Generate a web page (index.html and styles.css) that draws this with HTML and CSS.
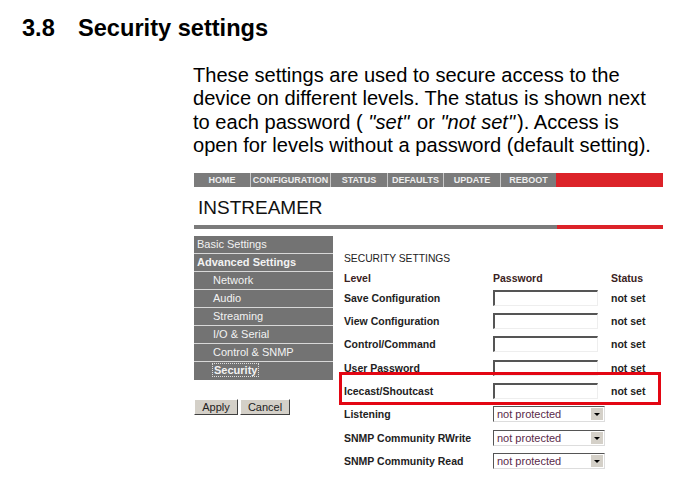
FILE: index.html
```html
<!DOCTYPE html>
<html lang="en">
<head>
  <meta charset="UTF-8">
  <title>3.8 Security settings</title>
  <link rel="stylesheet" href="styles.css">
</head>
<body>
  <h1><span class="num">3.8</span>Security settings</h1>

  <div class="doc">
    <p class="intro">These settings are used to secure access to the device on different levels. The status is shown next to each password ( <i>"set"</i> or <i>"not set"</i>). Access is open for levels without a password (default setting).</p>

    <div class="webui">
      <div class="nav">
        <span class="nav-item home">HOME</span>
        <span class="nav-item config">CONFIGURATION</span>
        <span class="nav-item status">STATUS</span>
        <span class="nav-item defaults">DEFAULTS</span>
        <span class="nav-item update">UPDATE</span>
        <span class="nav-item reboot">REBOOT</span>
        <span class="nav-fill"></span>
      </div>

      <div class="brand">INSTREAMER</div>
      <div class="rule"><span class="rule-gray"></span><span class="rule-red"></span></div>

      <div class="body">
        <div class="side">
          <div class="menu">
            <div class="menu-item top">Basic Settings</div>
            <div class="menu-item top bold">Advanced Settings</div>
            <div class="menu-item sub">Network</div>
            <div class="menu-item sub">Audio</div>
            <div class="menu-item sub">Streaming</div>
            <div class="menu-item sub">I/O &amp; Serial</div>
            <div class="menu-item sub">Control &amp; SNMP</div>
            <div class="menu-item sub bold"><span class="focus">Security</span></div>
          </div>
          <div class="buttons">
            <button class="btn apply">Apply</button>
            <button class="btn cancel">Cancel</button>
          </div>
        </div>

        <div class="main">
          <div class="title">SECURITY SETTINGS</div>
          <div class="grid">
            <div class="head">Level</div><div class="head">Password</div><div class="head">Status</div>

            <div class="label">Save Configuration</div><div><span class="field"></span></div><div class="state">not set</div>
            <div class="label">View Configuration</div><div><span class="field"></span></div><div class="state">not set</div>
            <div class="label">Control/Command</div><div><span class="field"></span></div><div class="state">not set</div>
            <div class="label">User Password</div><div><span class="field"></span></div><div class="state">not set</div>
            <div class="label mark">Icecast/Shoutcast</div><div><span class="field"></span></div><div class="state">not set</div>
            <div class="label">Listening</div><div class="wide"><span class="select">not protected<span class="arrow"></span></span></div>
            <div class="label">SNMP Community RWrite</div><div class="wide"><span class="select">not protected<span class="arrow"></span></span></div>
            <div class="label">SNMP Community Read</div><div class="wide"><span class="select">not protected<span class="arrow"></span></span></div>
          </div>
        </div>
      </div>
    </div>
  </div>
</body>
</html>
```

FILE: styles.css
```css
body {
  margin: 0;
  background: #fff;
  font-family: "Liberation Sans", Arial, sans-serif;
  color: #000;
}

h1 {
  margin: 0;
  padding: 14px 0 0 22px;
  font-size: 23.6px;
  line-height: 28px;
  font-weight: bold;
}

h1 .num {
  display: inline-block;
  width: 56px;
}

.doc {
  padding-left: 193px;
}

.intro {
  margin: 22px 0 0;
  width: 470px;
  font-size: 20.1px;
  line-height: 23.3px;
}

.intro i {
  padding-right: 2px;
}

.webui {
  width: 469px;
  margin: 16px 0 0 1px;
}

/* top navigation */
.nav {
  display: flex;
  height: 14px;
}

.nav-item {
  background: #7b7b7b;
  color: #eee;
  font-size: 9px;
  font-weight: bold;
  line-height: 14px;
  text-align: center;
  border-right: 1px solid #c8c8c8;
}

.home { width: 56px; }
.config { width: 79px; }
.status { width: 56px; }
.defaults { width: 55px; }
.update { width: 56px; }
.reboot { width: 55px; border-right: none; }

.nav-fill {
  flex: 1;
  background: #dc2329;
}

.brand {
  padding: 9px 0 0 4px;
  height: 29px;
  font-size: 19px;
  line-height: 24px;
  color: #111;
}

.rule {
  display: flex;
  height: 4px;
}

.rule-gray {
  width: 363px;
  background: #7b7b7b;
}

.rule-red {
  flex: 1;
  background: #dc2329;
}

.body {
  display: flex;
  gap: 11px;
  padding-top: 7px;
}

/* left menu */
.side {
  width: 139px;
}

.menu {
  background: #737373;
}

.menu-item {
  height: 17px;
  line-height: 17px;
  font-size: 11px;
  color: #f2f2f2;
  border-bottom: 1px solid #d8d8d8;
  padding-left: 3px;
}

.menu-item.sub {
  padding-left: 19px;
}

.menu-item.bold {
  font-weight: bold;
}

.menu-item:last-child {
  height: 18px;
  border-bottom: none;
}

.focus {
  outline: 1px dotted #ddd;
  padding: 0 1px;
}

.buttons {
  display: flex;
  gap: 2px;
  margin-top: 19px;
}

.btn {
  height: 16px;
  padding: 0 4px;
  font-family: "Liberation Sans", Arial, sans-serif;
  font-size: 11px;
  line-height: 12px;
  color: #222;
  background: #d4d0c8;
  border: 1px solid;
  border-color: #fff #404040 #404040 #fff;
}

.apply { width: 44px; }
.cancel { width: 50px; }

/* settings table */
.main {
  flex: 1;
  padding-top: 16px;
}

.title {
  font-size: 10.3px;
  line-height: 13px;
  margin-bottom: 4px;
  color: #222;
}

.grid {
  display: grid;
  grid-template-columns: 149px 118px 1fr;
  grid-template-rows: 17px;
  grid-auto-rows: 23.3px;
  align-items: center;
  font-size: 10.5px;
  font-weight: bold;
  color: #222;
}

.head {
  color: #3a2222;
}

.label.mark {
  position: relative;
}

.label.mark::before {
  content: "";
  position: absolute;
  left: -5px;
  top: -13px;
  width: 316px;
  height: 27px;
  border: 3px solid #e30613;
}

.field {
  display: block;
  width: 102px;
  height: 13px;
  border-style: solid;
  border-color: #555 #eee #eee #555;
  border-width: 2px 1px 1px 2px;
  background: #fff;
}

.wide {
  grid-column: span 2;
}

.select {
  display: flex;
  justify-content: space-between;
  align-items: center;
  width: 112px;
  height: 16px;
  padding: 0 1px 0 3px;
  box-sizing: border-box;
  border: 1px solid;
  border-color: #555 #ddd #ddd #555;
  font-size: 11px;
  font-weight: normal;
  color: #5a2a4a;
  background: #fff;
}

.arrow {
  width: 12px;
  height: 12px;
  background: #d4d0c8;
  border-left: 1px solid #fff;
  position: relative;
}

.arrow::after {
  content: "";
  position: absolute;
  left: 3px;
  top: 5px;
  border: 3px solid transparent;
  border-top: 3px solid #000;
  border-bottom: none;
}
```
